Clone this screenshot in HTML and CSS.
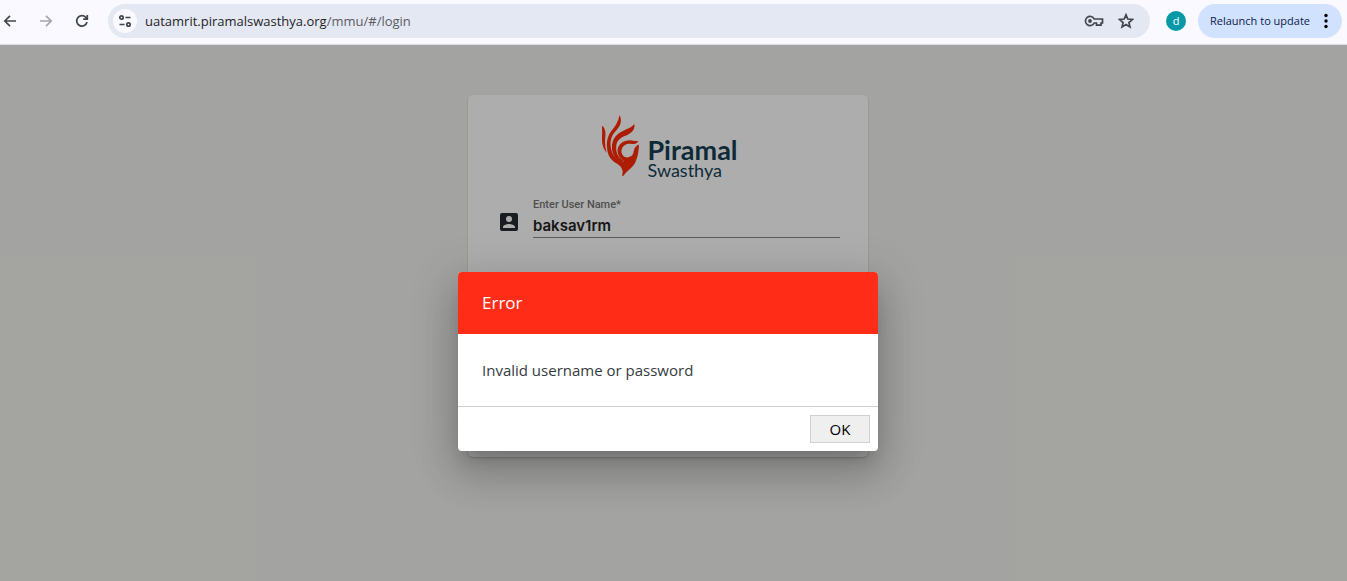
FILE: index.html
```
<!DOCTYPE html>
<html lang="en">
	<head>
		<meta charset="UTF-8">
		<meta name="viewport" content="width=device-width, initial-scale=1">
		<title>Login</title>
		<link rel="stylesheet" href="styles.css">
	</head>
	<body>
		<header class="toolbar">
			<nav class="nav-buttons">
				<button type="button" class="icon-button" aria-label="Back">
					<svg viewBox="0 0 16 16" width="16" height="16"><path d="M14 8H3M8 2.800L2.800 8L8 13.200"/></svg>
				</button>
				<button type="button" class="icon-button faded" aria-label="Forward">
					<svg viewBox="0 0 16 16" width="16" height="16"><path d="M2 8H13M8 2.800L13.200 8L8 13.200"/></svg>
				</button>
				<button type="button" class="icon-button" aria-label="Reload">
					<svg viewBox="0 0 16 16" width="16" height="16"><path d="M13 9A5.200 5.200 0 1 1 11.800 4.400L13.300 6M13.300 2V6.200H9.200"/></svg>
				</button>
			</nav>
			<div class="address-bar">
				<button type="button" class="site-info" aria-label="Site information">
					<svg viewBox="0 0 16 16" width="16" height="16"><circle cx="4.500" cy="4.500" r="1.700"/><path d="M8.500 4.500H13.500M2.500 11.500H7.500"/><circle cx="11.500" cy="11.500" r="1.700"/></svg>
				</button>
				<span class="url">uatamrit.piramalswasthya.org<span class="url-path">/mmu/#/login</span></span>
				<button type="button" class="icon-button" aria-label="Passwords">
					<svg viewBox="0 0 20 16" width="20" height="16"><path d="M10.200 6A4.600 4.600 0 1 0 10.200 10H12.500V12.200H17V10H18.500V6Z"/><circle class="solid" cx="6" cy="8" r="1.900"/></svg>
				</button>
				<button type="button" class="icon-button" aria-label="Bookmark">
					<svg viewBox="0 0 16 16" width="16" height="16"><path d="M8 1.800L9.800 6L14.500 6.400L10.900 9.500L12 14L8 11.600L4 14L5.100 9.500L1.500 6.400L6.200 6Z"/></svg>
				</button>
			</div>
			<button type="button" class="profile">d</button>
			<button type="button" class="relaunch">
				Relaunch to update
				<svg viewBox="0 0 4 16" width="4" height="16"><circle cx="2" cy="2.500" r="1.700"/><circle cx="2" cy="8" r="1.700"/><circle cx="2" cy="13.500" r="1.700"/></svg>
			</button>
		</header>

		<main class="page">
			<form class="login-card">
				<div class="logo">
					<svg class="logo-mark" viewBox="36 29 112 187" width="37" height="62" aria-hidden="true">
						<path d="M36 61C45 66 48 80 46 95C44 112 46 128 50 143C38 130 34 108 36 90C37 78 35 70 36 61Z"/>
						<path d="M89 29C98 46 92 62 81 73C66 88 59 104 63 128C66 147 75 160 92 169C104 178 102 190 98 198C96 183 84 178 72 170C58 160 52 145 51 125C49 100 58 84 69 71C79 59 85 48 89 29Z"/>
						<path d="M134 56C137 74 124 84 109 91C91 97 79 108 79 126C78 145 86 158 103 168L94 172C77 163 66 146 66 126C66 102 79 87 95 79C111 71 124 68 134 56Z"/>
						<path d="M146 107C142 118 130 116 117 116C102 118 95 128 95 139C95 149 103 157 113 157C127 156 131 147 132 138C134 128 139 121 148 118C147 145 142 166 132 180C124 190 106 204 100 214L97 212C101 196 97 184 88 175L103 168C91 161 83 150 83 136C84 117 101 105 121 105C130 105 138 109 146 107Z"/>
					</svg>
					<div class="logo-text">
						<strong>Piramal</strong>
						<span>Swasthya</span>
					</div>
				</div>
				<div class="field-row">
					<svg class="account" viewBox="0 0 18 18" width="18" height="18" aria-hidden="true"><path fill-rule="evenodd" d="M2 0H16Q18 0 18 2V16Q18 18 16 18H2Q0 18 0 16V2Q0 0 2 0ZM9 3A3 3 0 1 0 9 9A3 3 0 1 0 9 3ZM3 15H15V14C15 12 11 11 9 11S3 12 3 14Z"/></svg>
					<div class="field">
						<label for="username">Enter User Name*</label>
						<input id="username" type="text" value="baksav1rm">
					</div>
				</div>
			</form>

			<div class="backdrop">
				<section class="dialog" role="alertdialog" aria-labelledby="dialog-title">
					<h2 id="dialog-title">Error</h2>
					<p>Invalid username or password</p>
					<div class="dialog-actions">
						<button type="button">OK</button>
					</div>
				</section>
			</div>
		</main>
	</body>
</html>
```
FILE: styles.css
```
* {
	box-sizing: border-box;
}
body {
	margin: 0;
	min-height: 100vh;
	display: flex;
	flex-direction: column;
	font-family: "Open Sans", "Noto Sans", sans-serif;
	color: #1f1f1f;
}
button {
	border: 0;
	padding: 0;
	background: none;
	font: inherit;
	color: inherit;
}
svg {
	display: block;
	flex: none;
}

/* browser toolbar */
.toolbar {
	display: flex;
	align-items: center;
	height: 45px;
	padding: 0 5px 3px 2px;
	background: #f9f9ff;
	border-bottom: 1px solid #dcdce2;
}
.nav-buttons {
	display: flex;
	gap: 20px;
	margin-right: 18px;
}
.icon-button svg,
.site-info svg {
	fill: none;
	stroke: #41464d;
	stroke-width: 1.7;
}
.faded {
	opacity: 0.45;
}
.address-bar {
	flex: 1;
	display: flex;
	align-items: center;
	gap: 14px;
	height: 34px;
	padding: 0 16px 0 5px;
	border-radius: 17px;
	background: #e4e8f3;
}
.site-info {
	display: grid;
	place-items: center;
	width: 24px;
	height: 24px;
	border-radius: 50%;
	background: #f9f9ff;
}
.url {
	flex: 1;
	margin-left: -6px;
	font-size: 13px;
}
.url-path {
	color: #5a5c62;
}
.icon-button .solid {
	fill: #41464d;
	stroke: none;
}
.profile {
	width: 20px;
	height: 20px;
	margin: 0 12px 0 16px;
	border-radius: 50%;
	background: #0799a8;
	color: #fff;
	font-size: 11px;
	line-height: 20px;
}
.relaunch {
	display: flex;
	align-items: center;
	justify-content: space-between;
	width: 144px;
	height: 34px;
	padding: 0 14px 0 12px;
	border-radius: 17px;
	background: #d1e2ff;
	color: #0a2149;
	font-size: 11px;
	font-weight: 500;
	white-space: nowrap;
}

/* login page */
.page {
	position: relative;
	flex: 1;
	display: flex;
	flex-direction: column;
	align-items: center;
	padding: 50px 11px 0 0;
	background: #f1f1ed;
}
.login-card {
	width: 400px;
	min-height: 362px;
	padding: 20px 28px 20px 32px;
	border-radius: 5px;
	background: #fff;
	box-shadow: 0 1px 2px rgba(0, 0, 0, 0.2);
}
.logo {
	display: flex;
	justify-content: center;
	gap: 8px;
	height: 66px;
}
.logo-mark {
	fill: #ff2c06;
}
.logo-text {
	display: flex;
	flex-direction: column;
	padding-top: 22px;
	color: #163f54;
	font-family: Lato, "Open Sans", sans-serif;
}
.logo-text strong {
	font-size: 27px;
	line-height: 26px;
}
.logo-text span {
	font-size: 18px;
	line-height: 14px;
}
.field-row {
	display: flex;
	align-items: flex-end;
	gap: 15px;
	margin-top: 16px;
}
.account {
	margin-bottom: 7px;
	fill: #252b33;
}
.field {
	flex: 1;
	display: flex;
	flex-direction: column;
	font-family: Inter, Roboto, sans-serif;
}
.field label {
	font-family: Roboto, sans-serif;
	font-size: 11px;
	font-weight: 500;
	line-height: 16px;
	color: #757575;
}
.field input {
	width: 100%;
	height: 25px;
	padding: 0;
	border: 0;
	border-bottom: 1px solid #8a8a8a;
	outline: 0;
	background: none;
	color: #222;
	font: 600 15px Inter, Roboto, sans-serif;
}

/* error dialog */
.backdrop {
	position: absolute;
	inset: 0;
	display: flex;
	justify-content: center;
	align-items: flex-start;
	padding: 227px 11px 0 0;
	background: rgba(0, 0, 0, 0.32);
}
.dialog {
	width: 420px;
	border-radius: 4px;
	overflow: hidden;
	background: #fff;
	box-shadow: 0 11px 15px -7px rgba(0, 0, 0, 0.2), 0 24px 38px 3px rgba(0, 0, 0, 0.14), 0 9px 46px 8px rgba(0, 0, 0, 0.12);
}
.dialog h2 {
	margin: 0;
	padding: 0 24px;
	background: #ff2d17;
	color: #fff;
	font-size: 17px;
	font-weight: 400;
	line-height: 62px;
}
.dialog p {
	margin: 0;
	padding: 0 24px;
	color: #363b40;
	font-size: 15px;
	line-height: 72px;
}
.dialog-actions {
	display: flex;
	justify-content: flex-end;
	padding: 8px;
	border-top: 1px solid #d0d0d0;
}
.dialog-actions button {
	width: 60px;
	height: 28px;
	border: 1px solid #d0d0d0;
	background: #efefef;
	color: #000;
	font-size: 15px;
}
```
